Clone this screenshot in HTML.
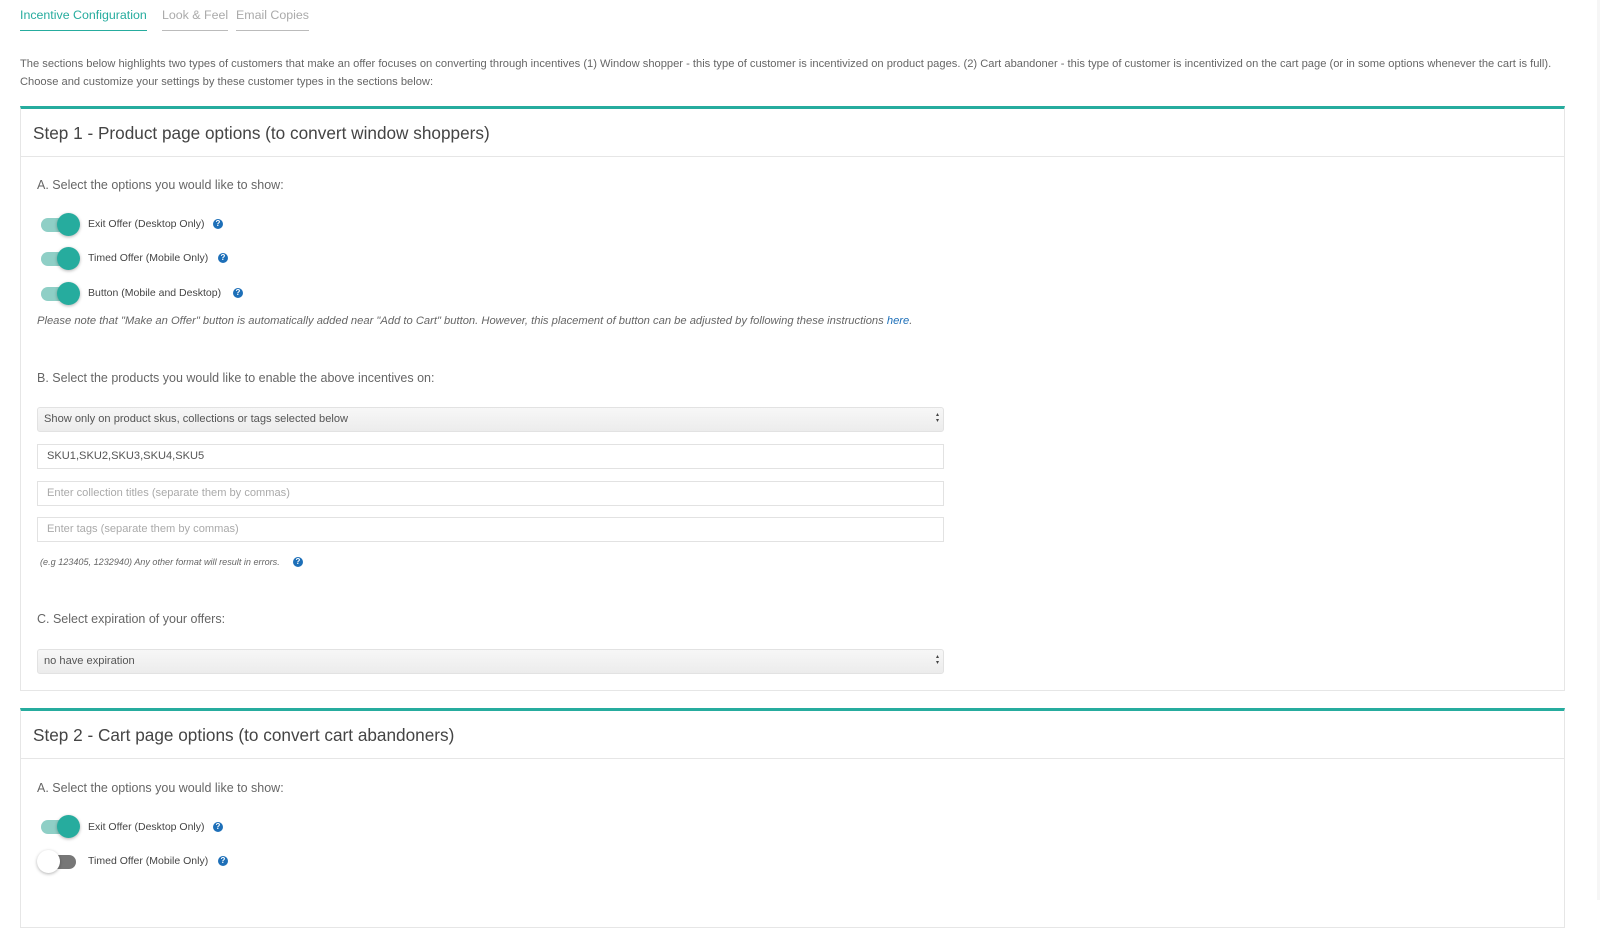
<!DOCTYPE html>
<html><head><style>
*{box-sizing:border-box;margin:0;padding:0}
body{width:1600px;height:900px;overflow:hidden;background:#fff;font-family:"Liberation Sans",sans-serif;color:#666;position:relative}
.sb{position:absolute;left:1597px;top:0;width:3px;height:900px;background:#f6f6f6}
.abs{position:absolute;white-space:nowrap}
.tab{position:absolute;top:8px;font-size:12.4px;padding-bottom:8px;border-bottom:1px solid #bbb;color:#aaa}
.tab.on{color:#26ac9e;border-bottom:1px solid #26ac9e}
.panel{position:absolute;left:20px;width:1545px;border:1px solid #e6e6e6;border-top:3px solid #26ac9e;background:#fff}
.ph{height:48px;border-bottom:1px solid #e6e6e6;font-size:17.2px;color:#444;padding:14px 0 0 12px}
.lbl{font-size:12.5px;color:#666}
.tg{position:absolute;width:43px;height:24px}
.tg .tr{position:absolute;left:4px;top:5px;width:35px;height:14px;border-radius:7px;background:#8fcfc6}
.tg .kn{position:absolute;left:20px;top:0;width:23px;height:23px;border-radius:50%;background:#26ac9e;box-shadow:0 1px 3px rgba(0,0,0,.3)}
.tg.off .tr{background:#777}
.tg.off .kn{left:0;background:#fff}
.tl{font-size:10.5px;color:#444}
.q{display:inline-block;width:10px;height:10px;border-radius:50%;background:#1d6fb8;color:#fff;font-size:8px;font-weight:bold;text-align:center;line-height:10px;position:absolute}
.sel{position:absolute;left:37px;width:907px;height:25px;border:1px solid #e2e2e2;border-radius:3px;background:linear-gradient(#f7f7f7,#ececec);font-size:11.1px;color:#555;padding:5px 6px}
.sel:after{content:"▴\A▾";white-space:pre;position:absolute;right:4px;top:4px;font-size:6px;line-height:6px;color:#444}
.inp{position:absolute;left:37px;width:907px;height:25px;border:1px solid #e2e2e2;font-size:11.1px;color:#aaa;padding:5px 9px}
</style></head><body>
<div class="sb"></div>
<div class="tab on" style="left:20px">Incentive Configuration</div>
<div class="tab" style="left:162px">Look &amp; Feel</div>
<div class="tab" style="left:236px">Email Copies</div>
<div class="abs" style="left:20px;top:56px;font-size:11.15px;line-height:17.5px;color:#666">The sections below highlights two types of customers that make an offer focuses on converting through incentives (1) Window shopper - this type of customer is incentivized on product pages. (2) Cart abandoner - this type of customer is incentivized on the cart page (or in some options whenever the cart is full).<br>Choose and customize your settings by these customer types in the sections below:</div>

<div class="panel" style="top:106px;height:585px"><div class="ph">Step 1 - Product page options (to convert window shoppers)</div></div>
<div class="abs lbl" style="left:37px;top:178px">A. Select the options you would like to show:</div>
<div class="tg" style="left:37px;top:213px"><div class="tr"></div><div class="kn"></div></div>
<div class="abs tl" style="left:88px;top:218px">Exit Offer (Desktop Only)</div><span class="q" style="left:213px;top:219px">?</span>
<div class="tg" style="left:37px;top:247px"><div class="tr"></div><div class="kn"></div></div>
<div class="abs tl" style="left:88px;top:252px">Timed Offer (Mobile Only)</div><span class="q" style="left:218px;top:253px">?</span>
<div class="tg" style="left:37px;top:282px"><div class="tr"></div><div class="kn"></div></div>
<div class="abs tl" style="left:88px;top:287px">Button (Mobile and Desktop)</div><span class="q" style="left:233px;top:288px">?</span>
<div class="abs" style="left:37px;top:315px;font-size:11.2px;font-style:italic;color:#666">Please note that "Make an Offer" button is automatically added near "Add to Cart" button. However, this placement of button can be adjusted by following these instructions <span style="color:#1d6fb8">here</span>.</div>
<div class="abs lbl" style="left:37px;top:371px">B. Select the products you would like to enable the above incentives on:</div>
<div class="sel" style="top:407px">Show only on product skus, collections or tags selected below</div>
<div class="inp" style="top:444px;color:#555">SKU1,SKU2,SKU3,SKU4,SKU5</div>
<div class="inp" style="top:481px">Enter collection titles (separate them by commas)</div>
<div class="inp" style="top:517px">Enter tags (separate them by commas)</div>
<div class="abs" style="left:40px;top:557px;font-size:9.1px;font-style:italic;color:#666">(e.g 123405, 1232940) Any other format will result in errors.</div><span class="q" style="left:293px;top:557px">?</span>
<div class="abs lbl" style="left:37px;top:612px">C. Select expiration of your offers:</div>
<div class="sel" style="top:649px">no have expiration</div>

<div class="panel" style="top:708px;height:220px"><div class="ph">Step 2 - Cart page options (to convert cart abandoners)</div></div>
<div class="abs lbl" style="left:37px;top:781px">A. Select the options you would like to show:</div>
<div class="tg" style="left:37px;top:815px"><div class="tr"></div><div class="kn"></div></div>
<div class="abs tl" style="left:88px;top:821px">Exit Offer (Desktop Only)</div><span class="q" style="left:213px;top:822px">?</span>
<div class="tg off" style="left:37px;top:850px"><div class="tr"></div><div class="kn"></div></div>
<div class="abs tl" style="left:88px;top:855px">Timed Offer (Mobile Only)</div><span class="q" style="left:218px;top:856px">?</span>
</body></html>
